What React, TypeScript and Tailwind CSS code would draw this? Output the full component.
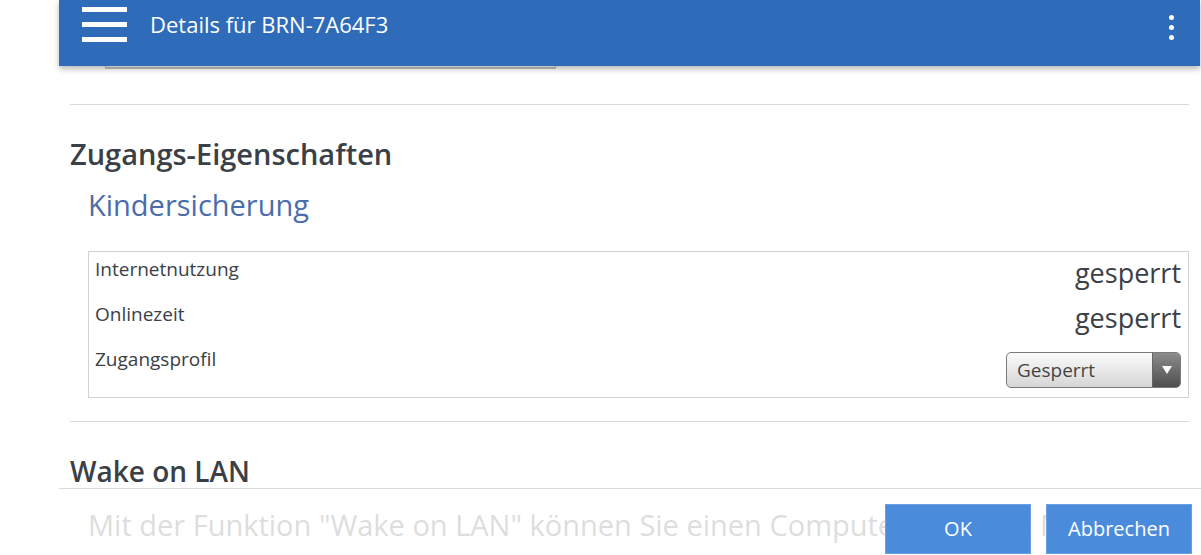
import React from "react";

const rows = [
  { label: "Internetnutzung", value: "gesperrt" },
  { label: "Onlinezeit", value: "gesperrt" },
];

const App = () => {
  return (
    <div className="relative h-[555px] w-[1201px] overflow-hidden bg-white font-['Open_Sans',sans-serif] text-[#3b4046]">
      <div className="flex h-full">
        {/* hidden sidebar gutter */}
        <div className="w-[59px] shrink-0" />

        <div className="flex min-w-0 flex-1 flex-col">
          {/* Top bar */}
          <header className="relative z-10 mr-[1px] flex h-[66px] shrink-0 items-start bg-[#2e6bb9] pl-[23px] pr-[26px] shadow-[0_3px_6px_rgba(0,0,0,0.28)]">
            <div className="mt-[7px] flex w-[45px] flex-col gap-[10px]">
              <span className="h-[5px] w-full bg-white" />
              <span className="h-[5px] w-full bg-white" />
              <span className="h-[5px] w-full bg-white" />
            </div>
            <h1 className="ml-[23px] mt-[9px] text-[22px] leading-[30px] text-white">
              Details für BRN-7A64F3
            </h1>
            <div className="ml-auto mt-[15px] flex flex-col items-center gap-[5px]">
              <span className="h-[5px] w-[5px] rounded-full bg-white" />
              <span className="h-[5px] w-[5px] rounded-full bg-white" />
              <span className="h-[5px] w-[5px] rounded-full bg-white" />
            </div>
          </header>

          {/* Scrolled content */}
          <div className="flex flex-col pl-[11px] pr-[12px]">
            {/* bottom edge of an input scrolled under the bar */}
            <div className="ml-[35px] h-[3px] w-[451px] border-b-2 border-x border-[#c4c4c4]" />

            <div className="mt-[35px] border-t border-[#d9d9d9]" />

            <h2 className="mt-[31px] text-[29px] font-semibold leading-[36px]">
              Zugangs-Eigenschaften
            </h2>
            <h3 className="ml-[18px] mt-[13px] text-[29px] leading-[40px] text-[#4a6daa]">
              Kindersicherung
            </h3>

            <div className="ml-[18px] mt-[26px] flex flex-col border border-[#d2d2d2] py-[5px] pl-[6px] pr-[7px]">
              {rows.map((r) => (
                <div key={r.label} className="flex h-[45px] items-start justify-between">
                  <span className="text-[19px] leading-[24px]">{r.label}</span>
                  <span className="mt-[1px] text-[27px] leading-[30px]">{r.value}</span>
                </div>
              ))}
              <div className="flex h-[45px] items-start justify-between">
                <span className="text-[19px] leading-[24px]">Zugangsprofil</span>
                <div className="mt-[5px] flex h-[36px] w-[175px] overflow-hidden rounded-[5px] border border-[#7a7a7a] bg-gradient-to-b from-[#fbfbfb] to-[#d6d6d6]">
                  <span className="flex-1 pl-[10px] text-[19px] leading-[34px] text-[#454545]">
                    Gesperrt
                  </span>
                  <span className="flex w-[28px] items-center justify-center border-l border-[#666] bg-gradient-to-b from-[#8c8c8c] to-[#4f4f4f]">
                    <svg width="10" height="8" viewBox="0 0 10 8">
                      <path d="M0 0 H10 L5 8 Z" fill="#fff" />
                    </svg>
                  </span>
                </div>
              </div>
            </div>

            <div className="mt-[23px] border-t border-[#d9d9d9]" />

            <h2 className="mt-[31px] text-[28px] font-semibold leading-[36px]">Wake on LAN</h2>
            <p className="ml-[18px] mt-[14px] text-[29px] leading-[44px] text-[#555]">
              Mit der Funktion "Wake on LAN" können Sie einen Computer über das Netzwerk starten.
            </p>
          </div>
        </div>
      </div>

      {/* Dialog footer over the scrolled content */}
      <div className="absolute bottom-0 left-[59px] right-0 top-[488px] flex items-start justify-end gap-[15px] border-t border-[#dcdcdc] bg-white/80 pr-[9px] pt-[15px]">
        <button className="h-[50px] w-[146px] border border-[#6aa0e2] bg-[#4a8cdb] text-[20px] text-white">
          OK
        </button>
        <button className="h-[50px] w-[146px] border border-[#6aa0e2] bg-[#4a8cdb] text-[20px] text-white">
          Abbrechen
        </button>
      </div>
    </div>
  );
};

export default App;
